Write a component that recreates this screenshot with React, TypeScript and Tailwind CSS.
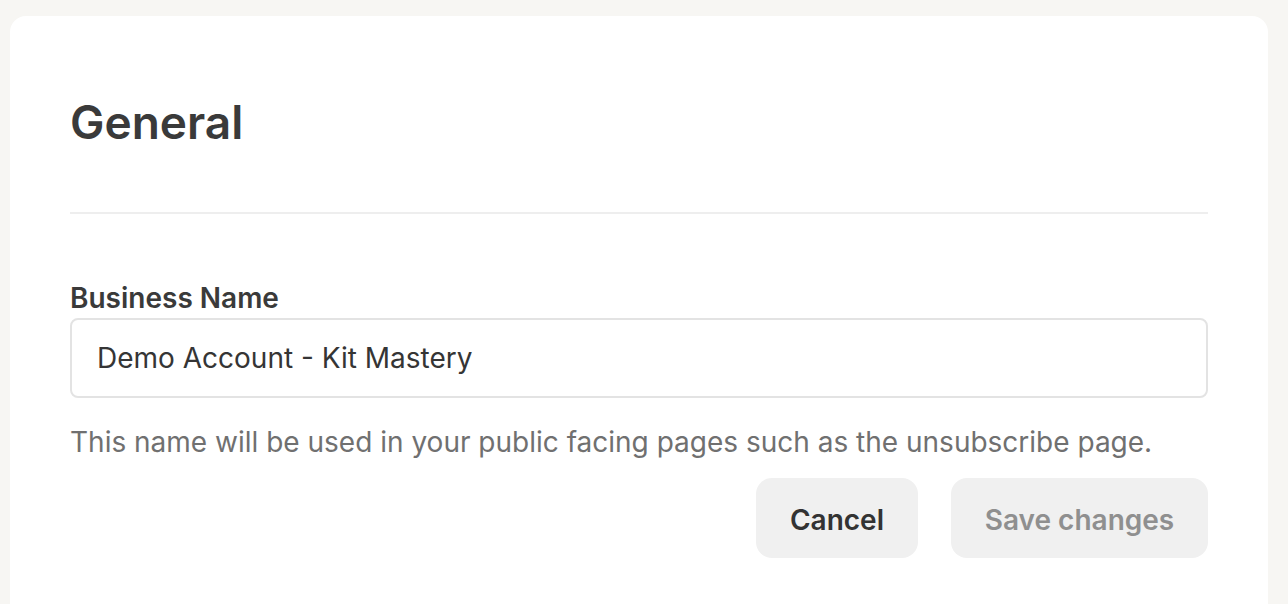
export default function App() {
  return (
    <div className="h-[604px] overflow-hidden bg-[#f7f6f3] pl-[10px] pr-[20px] pt-4 font-['Inter',_'Noto_Sans',_sans-serif] text-[#3b3b3b]">
      <div className="bg-white rounded-t-2xl h-[700px] px-[60px] pt-[78px]">
        <h1 className="text-[46px] font-semibold leading-[56px] text-[#3a3a3a]">General</h1>

        <div className="mt-[62px] h-[2px] bg-[#eeeeee]" />

        <div className="mt-[66px]">
          <label className="block text-[28px] font-semibold leading-[36px] text-[#3a3a3a]">Business Name</label>
          <div className="mt-[2px] h-[80px] rounded-lg border-2 border-[#e3e3e3] flex items-center px-[25px]">
            <span className="text-[28px] text-[#353535]">Demo Account - Kit Mastery</span>
          </div>
          <p className="mt-[26px] text-[28px] leading-[36px] text-[#707070]">
            This name will be used in your public facing pages such as the unsubscribe page.
          </p>
        </div>

        <div className="mt-[18px] flex justify-end gap-[33px]">
          <button className="h-[80px] w-[162px] pt-[3px] rounded-2xl bg-[#f0f0f0] text-[28px] font-semibold text-[#333333]">
            Cancel
          </button>
          <button className="h-[80px] w-[257px] pt-[3px] rounded-2xl bg-[#f0f0f0] text-[28px] font-semibold text-[#8f8f8f]">
            Save changes
          </button>
        </div>
      </div>
    </div>
  );
}
